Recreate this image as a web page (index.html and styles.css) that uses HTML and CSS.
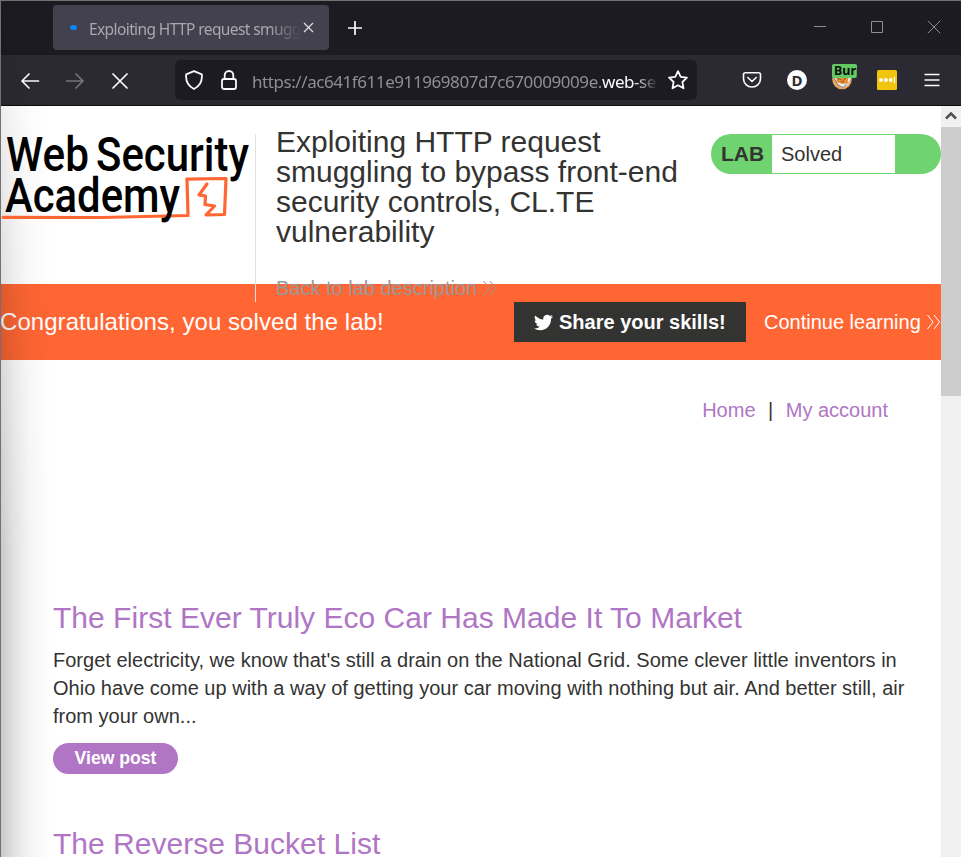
FILE: index.html
```html
<!DOCTYPE html>
<html lang="en">
<head>
<meta charset="utf-8">
<title>Exploiting HTTP request smuggling</title>
<link rel="stylesheet" href="styles.css">
</head>
<body>
<div class="window">
  <div class="tabbar">
    <div class="tab">
      <span class="tab-dot"></span>
      <span class="tab-title">Exploiting HTTP request smuggling</span>
      <svg class="tab-close" viewBox="0 0 11 11"><path d="M1 1l9 9M10 1l-9 9"/></svg>
    </div>
    <svg class="new-tab" viewBox="0 0 16 16"><path d="M8 1v14M1 8h14"/></svg>
    <div class="controls">
      <svg viewBox="0 0 14 14"><path d="M1 6.500h12"/></svg>
      <svg viewBox="0 0 14 14"><path d="M1.500 1.500h11v11h-11z"/></svg>
      <svg viewBox="0 0 14 14"><path d="M.8.8l12.400 12.400M13.200.8L.8 13.200"/></svg>
    </div>
  </div>
  <div class="toolbar">
    <svg class="nav" viewBox="0 0 20 20"><path d="M18.500 10H2M9 3l-7 7 7 7"/></svg>
    <svg class="nav dim" viewBox="0 0 20 20"><path d="M1.500 10H18M11 3l7 7-7 7"/></svg>
    <svg class="nav" viewBox="0 0 20 20"><path d="M3 3l14 14M17 3L3 17"/></svg>
    <div class="urlbar">
      <svg class="shield" viewBox="0 0 20 20"><path d="M10 1.200L17.800 4.300c.7 6.500-2.300 12-7.800 14.700C4.500 16.300 1.500 10.800 2.200 4.300z"/></svg>
      <svg class="lock" viewBox="0 0 20 20"><rect x="3" y="9" width="14" height="10" rx="2"/><path d="M5.700 9V5.300a4.300 4.300 0 0 1 8.600 0V9"/></svg>
      <span class="url">https://ac641f611e911969807d7c670009009e.<b>web-security-academy.net</b></span>
      <svg class="star" viewBox="0 0 20 20"><path d="M10 1.200l2.700 5.700 6.200.8-4.500 4.300 1.100 6.300L10 15.300l-5.500 3 1.100-6.300L1.100 7.700l6.200-.8z"/></svg>
    </div>
    <div class="extensions">
      <svg class="ext" viewBox="0 0 20 20"><path class="line" d="M3.300 2.800h13.400q1.800 0 1.800 1.800v4.200a8.500 8.200 0 0 1-17 0V4.600q0-1.800 1.800-1.800zM5.800 7.500l4.200 4 4.200-4"/></svg>
      <span class="disc">D</span>
      <span class="fox">
        <svg viewBox="0 0 20 20"><circle cx="10" cy="9.500" r="9.800" fill="#e9a45d"/><path d="M1 7L5 14l5 4 6-3 3-8-7 2z" fill="#f2efea"/><path d="M4.500 6h12l-1 7-5 1-6-2z" fill="#ee8b2b"/><path d="M5.500 8.500l4 1.500M14 8l-3 2.500M9 12l3-.5" stroke="#7b5a43"/><path d="M2 8l4 7 5 2.500 5-5" stroke="#79777a"/></svg>
        <span class="badge">Burp</span>
      </span>
      <svg class="ext" viewBox="0 0 20 20"><rect width="20" height="20" rx="1.500" fill="#f1c40f"/><g fill="#fff"><circle cx="4" cy="10" r="1.900"/><circle cx="8.900" cy="10" r="1.900"/><circle cx="13.800" cy="10" r="1.900"/><rect x="17" y="6.500" width="1" height="7"/></g></svg>
      <svg class="menu" viewBox="0 0 16 16"><path d="M.5 2.500h15M.5 8h15M.5 13.500h15"/></svg>
    </div>
  </div>
  <div class="viewport">
    <main class="page">
      <header class="lab-header">
        <svg class="logo" viewBox="0 0 254 100">
          <path class="mark" d="M2 83.300L100 83.500L187 81.500L186 45.200"/>
          <path class="mark" d="M186 45.200L225 44.500L223.500 80.500L205 81L213.500 72L204 70.500L204.500 62L198 61L206 50"/>
          <text x="5" y="36.500" textLength="83" lengthAdjust="spacingAndGlyphs">Web</text>
          <text x="95" y="36.500" textLength="153" lengthAdjust="spacingAndGlyphs">Security</text>
          <text x="4" y="77.500" textLength="175" lengthAdjust="spacingAndGlyphs">Academy</text>
        </svg>
        <div class="lab-title">
          <h1>Exploiting HTTP request<br>smuggling to bypass front-end<br>security controls, CL.TE<br>vulnerability</h1>
          <a class="back">Back to lab description<svg class="chev" viewBox="0 0 14 16"><path d="M1 1l5.500 7L1 15M7.500 1l5.500 7-5.500 7"/></svg></a>
        </div>
        <div class="status"><strong>LAB</strong><span>Solved</span></div>
      </header>
      <section class="banner">
        <p>Congratulations, you solved the lab!</p>
        <a class="share"><svg viewBox="0 0 24 24"><path d="M23.950 4.570a10 10 0 0 1-2.820.77 4.960 4.960 0 0 0 2.160-2.720c-.95.55-2 .95-3.130 1.180a4.920 4.920 0 0 0-8.380 4.480C7.690 8.090 4.070 6.130 1.640 3.160a4.920 4.920 0 0 0 1.520 6.570 4.900 4.900 0 0 1-2.230-.61v.06a4.920 4.920 0 0 0 3.950 4.830 5 5 0 0 1-2.210.08 4.940 4.940 0 0 0 4.600 3.420A9.870 9.870 0 0 1 0 19.540a14 14 0 0 0 7.550 2.210c9.050 0 14-7.500 14-13.980v-.64a9.940 9.940 0 0 0 2.460-2.550z"/></svg>Share your skills!</a>
        <a class="continue">Continue learning<svg class="chev" viewBox="0 0 14 16"><path d="M1 1l5.500 7L1 15M7.500 1l5.500 7-5.500 7"/></svg></a>
      </section>
      <nav class="links"><a>Home</a><span>|</span><a>My account</a></nav>
      <article class="post">
        <h2>The First Ever Truly Eco Car Has Made It To Market</h2>
        <p>Forget electricity, we know that's still a drain on the National Grid. Some clever little inventors in<br>Ohio have come up with a way of getting your car moving with nothing but air. And better still, air<br>from your own...</p>
        <a class="view">View post</a>
      </article>
      <article class="post">
        <h2>The Reverse Bucket List</h2>
      </article>
    </main>
    <div class="scrollbar">
      <svg viewBox="0 0 20 21"><path d="M5 12.500l5-5 5 5"/></svg>
      <div class="thumb"></div>
    </div>
  </div>
  <div class="edge-shade"></div>
</div>
</body>
</html>
```
FILE: styles.css
```css
* { box-sizing: border-box; }
body { margin: 0; width: 961px; height: 857px; overflow: hidden; font-family: "Liberation Sans", Arial, sans-serif; color: #333332; }
svg { display: block; flex: none; fill: none; }
h1, h2, p { margin: 0; font-weight: 400; }

.window { position: relative; height: 857px; border: solid #727272; border-width: 1px 0 0 1px; display: flex; flex-direction: column; overflow: hidden; }

.tabbar { height: 54px; background: #1c1b22; display: flex; align-items: flex-start; }
.tab { margin: 4px 0 0 52px; width: 276px; height: 45px; border-radius: 4px; background: #42414d; display: flex; align-items: center; padding-left: 17px; }
.tab-dot { width: 7px; height: 5px; border-radius: 50%; background: #0a84ff; flex: none; }
.tab-title { margin: 2px 0 0 12px; width: 212px; flex: none; overflow: hidden; white-space: nowrap; font: 15.500px/24px "Noto Sans", sans-serif; letter-spacing: -.6px; color: #a9a8b0; -webkit-mask-image: linear-gradient(90deg, #000 180px, transparent 212px); mask-image: linear-gradient(90deg, #000 180px, transparent 212px); }
.tab-close { width: 11px; height: 11px; margin-left: 2px; stroke: #e0e0e4; stroke-width: 1.200; }
.new-tab { width: 16px; height: 16px; margin: 19px 0 0 18px; stroke: #fbfbfe; stroke-width: 1.700; }
.controls { margin: 19px 20px 0 auto; display: flex; gap: 43px; }
.controls svg { width: 14px; height: 14px; stroke: #8f8e93; stroke-width: 1; }

.toolbar { height: 51px; background: #2b2a33; border-bottom: 1px solid #0c0c0d; display: flex; align-items: center; padding-left: 19px; }
.nav { width: 20px; height: 20px; margin: 1px 25px 0 0; stroke: #fbfbfe; stroke-width: 1.700; stroke-linecap: round; stroke-linejoin: round; }
.nav.dim { stroke: #75747b; }
.urlbar { width: 522px; height: 40px; margin-left: 20px; border-radius: 5px; background: #1c1b22; display: flex; align-items: center; padding-left: 9px; stroke: #fbfbfe; stroke-width: 1.800; stroke-linejoin: round; }
.urlbar svg { width: 20px; height: 20px; }
.lock { margin-left: 15px; }
.url { width: 405px; margin: 3px 0 0 13px; flex: none; overflow: hidden; white-space: nowrap; font: 17px/26px "Noto Sans", sans-serif; letter-spacing: -.43px; color: #8f8e94; -webkit-mask-image: linear-gradient(90deg, #000 380px, transparent 407px); mask-image: linear-gradient(90deg, #000 380px, transparent 407px); }
.url b { font-weight: 400; color: #fbfbfe; }
.star { margin-left: 11px; }
.extensions { margin: 0 21px 0 auto; display: flex; align-items: center; gap: 25px; }
.ext { width: 20px; height: 20px; }
.line { stroke: #fbfbfe; stroke-width: 1.600; stroke-linecap: round; stroke-linejoin: round; }
.extensions { position: relative; }
.disc { width: 20px; height: 20px; border-radius: 50%; background: #fbfbfe; color: #2b2a33; font: 700 15px/20px "Noto Sans", sans-serif; text-align: center; }
.fox { position: relative; width: 20px; height: 20px; }
.fox svg { width: 20px; height: 20px; }
.badge { position: absolute; left: 0; top: -6px; width: 25px; height: 14px; border-radius: 2px; background: #62ca62; color: #0c0c0d; overflow: hidden; padding-left: 2px; font: 700 12.500px/13px "Noto Sans", sans-serif; }
.menu { width: 16px; height: 16px; margin-left: 2px; stroke: #fbfbfe; stroke-width: 1.500; }

.viewport { flex: 1; min-height: 0; display: flex; background: #fff; }
.page { width: 940px; flex: none; overflow: hidden; }
.lab-header { height: 178px; padding-top: 28px; display: flex; align-items: flex-start; position: relative; z-index: 1; }
.logo { width: 254px; height: 100px; font: 500 47.500px Roboto, sans-serif; fill: #000; }
.mark { fill: none; stroke: #ff6633; stroke-width: 3.200; stroke-linejoin: round; stroke-linecap: round; }
.lab-title { width: 456px; height: 168px; border-left: 1px solid #e2e2e2; padding-left: 20px; white-space: nowrap; }
.lab-title h1 { font-size: 30px; line-height: 30px; margin-top: -7px; }
.back { margin-top: 29px; display: flex; align-items: center; font-size: 20px; line-height: 24px; color: #999; }
.chev { width: 15px; height: 16px; margin-left: 5px; stroke: currentColor; stroke-width: 1; }
.status { width: 230px; height: 40px; border-radius: 20px; background: #6fd36f; display: flex; align-items: center; padding: 1px 46px 1px 10px; }
.status strong { width: 51px; flex: none; font-size: 21px; line-height: 38px; }
.status span { width: 123px; height: 38px; flex: none; background: #fff; padding-left: 9px; font-size: 20px; line-height: 38px; }
.banner { height: 76px; background: #ff6633; color: #fff; display: flex; align-items: center; }
.banner p { width: 513px; flex: none; margin-left: -1px; padding-right: 0; font-size: 24px; letter-spacing: .06px; white-space: nowrap; }
.share { width: 232px; height: 40px; margin-left: 1px; flex: none; background: #333332; display: flex; align-items: center; padding-left: 20px; font-size: 20px; font-weight: 700; white-space: nowrap; }
.share svg { width: 19px; height: 19px; margin-right: 6px; fill: #fff; }
.continue { margin-left: 18px; display: flex; align-items: center; font-size: 20px; white-space: nowrap; }
.links { display: flex; justify-content: flex-end; gap: 12.500px; padding: 36px 53px 0 0; font-size: 20px; line-height: 28px; height: 227px; }
.links a, .post h2 { color: #b075c5; }
.post { height: 226px; padding: 13px 0 0 52px; white-space: nowrap; }
.post h2 { font-size: 30px; line-height: 36px; letter-spacing: .02px; }
.post p { margin-top: 10px; font-size: 20px; line-height: 28px; letter-spacing: .01px; }
.view { display: block; width: 125px; height: 31px; margin-top: 13px; border-radius: 16px; background: #b075c5; color: #fff; font-size: 17.600px; font-weight: 700; line-height: 30px; text-align: center; }

.scrollbar { width: 20px; background: #f0f0f0; }
.scrollbar svg { width: 20px; height: 21px; stroke: #505050; stroke-width: 2.500; }
.thumb { height: 269px; background: #cdcdcd; }
.edge-shade { position: absolute; left: 0; top: 0; width: 50px; height: 856px; pointer-events: none; background: linear-gradient(90deg, rgba(0,0,0,.21), rgba(0,0,0,.12) 12px, rgba(0,0,0,.045) 28px, transparent 50px); -webkit-mask-image: linear-gradient(rgba(0,0,0,.15), rgba(0,0,0,.35) 120px, #000 550px); mask-image: linear-gradient(rgba(0,0,0,.15), rgba(0,0,0,.35) 120px, #000 550px); }
```
